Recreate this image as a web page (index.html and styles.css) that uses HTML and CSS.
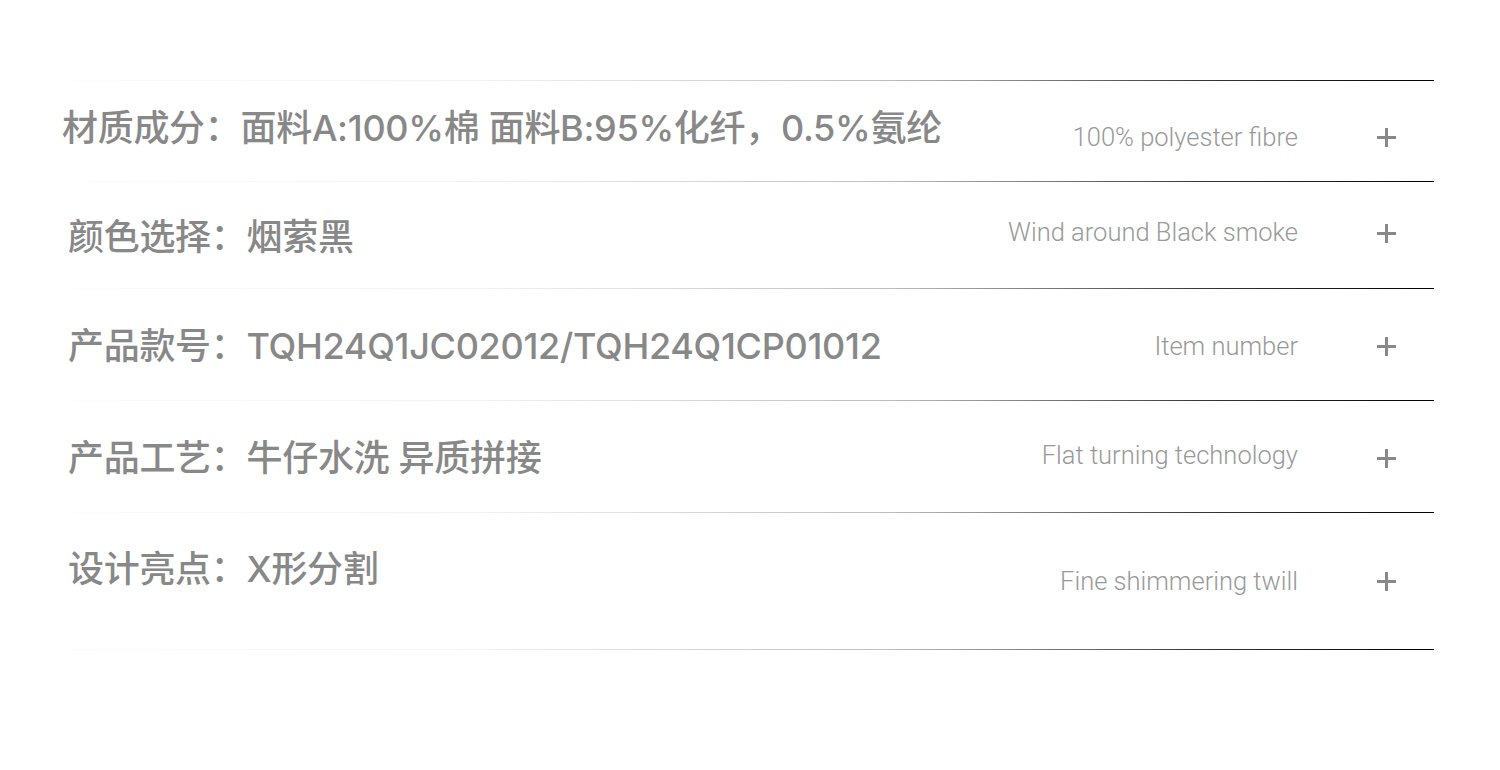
FILE: index.html
```html
<!DOCTYPE html>
<html lang="zh-CN">
<head>
<meta charset="utf-8">
<title>产品信息</title>
<link rel="stylesheet" href="styles.css">
</head>
<body>
<div class="spec-list">
  <div class="spec-row r1">
    <div class="label shift">材质成分：面料A:100%棉 面料B:95%化纤，0.5%氨纶</div>
    <div class="note">100% polyester fibre</div>
    <div class="plus"></div>
  </div>
  <div class="spec-row r2">
    <div class="label">颜色选择：烟萦黑</div>
    <div class="note">Wind around Black smoke</div>
    <div class="plus"></div>
  </div>
  <div class="spec-row r3">
    <div class="label">产品款号：TQH24Q1JC02012/TQH24Q1CP01012</div>
    <div class="note">Item number</div>
    <div class="plus"></div>
  </div>
  <div class="spec-row r4">
    <div class="label">产品工艺：牛仔水洗 异质拼接</div>
    <div class="note">Flat turning technology</div>
    <div class="plus"></div>
  </div>
  <div class="spec-row r5">
    <div class="label">设计亮点：X形分割</div>
    <div class="note">Fine shimmering twill</div>
    <div class="plus"></div>
  </div>
</div>
</body>
</html>
```
FILE: styles.css
```css
html, body {
  margin: 0;
  padding: 0;
  background: #ffffff;
}

body {
  width: 1500px;
  height: 770px;
  overflow: hidden;
}

.spec-list {
  margin: 80px 0 0 73px;
  width: 1361px;
  border-top: 1px solid;
  border-image: linear-gradient(to right, #fcfcfc 0%, #f2f2f2 30%, #bdbdbd 60%, #363636 83%, #000 100%) 1;
}

.spec-row {
  display: flex;
  align-items: flex-start;
  height: var(--h);
  border-bottom: 1px solid;
  border-image: linear-gradient(to right, #fcfcfc 0%, #f2f2f2 30%, #bdbdbd 60%, #363636 83%, #000 100%) 1;
}

.r1 { --h: 100px; --lt: 25px; --nt: 41px; --pt: 47px; }
.r2 { --h: 106px; --lt: 33px; --nt: 35px; --pt: 42px; }
.r3 { --h: 111px; --lt: 35px; --nt: 42px; --pt: 48px; }
.r4 { --h: 111px; --lt: 35px; --nt: 39px; --pt: 48px; }
.r5 { --h: 136px; --lt: 34px; --nt: 53px; --pt: 59px; }

.label {
  flex: 1;
  margin-top: var(--lt);
  margin-left: -5px;
  font-family: "Inter", "Noto Sans CJK SC", sans-serif;
  font-size: 36px;
  font-weight: 500;
  line-height: 44px;
  letter-spacing: -0.3px;
  color: #888888;
  white-space: nowrap;
}

.label.shift {
  margin-left: -11px;
}

.note {
  margin-top: var(--nt);
  font-family: "Roboto", sans-serif;
  font-size: 25.5px;
  font-weight: 300;
  line-height: 30px;
  color: #999999;
  white-space: nowrap;
}

.plus {
  position: relative;
  width: 19px;
  height: 19px;
  margin: var(--pt) 38px 0 79px;
}

.plus::before,
.plus::after {
  content: "";
  position: absolute;
  background: #888888;
}

.plus::before {
  left: 0;
  top: 8px;
  width: 19px;
  height: 3px;
}

.plus::after {
  left: 8px;
  top: 0;
  width: 3px;
  height: 19px;
}
```
